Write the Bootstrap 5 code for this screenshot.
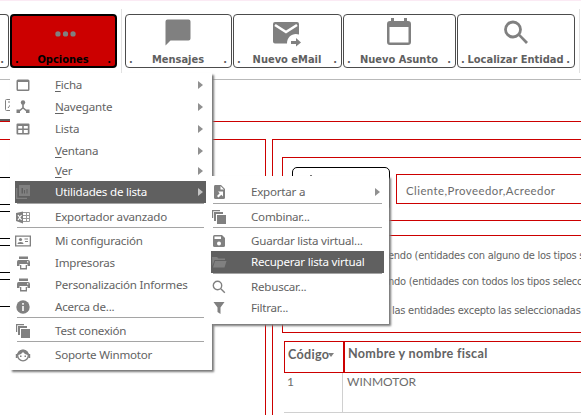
<!DOCTYPE html>
<html lang="es">
<head>
<meta charset="utf-8">
<meta name="viewport" content="width=device-width, initial-scale=1">
<title>Winmotor</title>
<link href="https://cdn.jsdelivr.net/npm/bootstrap@5.3.0/dist/css/bootstrap.min.css" rel="stylesheet">
<style>
html,body{margin:0;height:100%;overflow:hidden;background:#fff}
body{font-family:"Noto Sans",sans-serif;font-size:11.6px;line-height:1;color:#636363}
.screen{width:581px;height:415px}
svg{display:block;flex:none}
.ribbon{height:80px;border-top:1px solid #fbeaf4;border-bottom:1px solid #b9b9b9;gap:1px}
.tool{margin-top:13px;height:54px;flex:none;border:1px solid #4c4c4c;border-radius:4px;padding:0 4px 1px 3px;background:#fff;color:#606060;font:bold 11px/13px "DejaVu Sans Condensed","DejaVu Sans",sans-serif}
.tool svg{fill:#808080;height:31px;margin-top:2px}
.tool.cut{border-left:0;border-radius:0 4px 4px 0}
.tool.on{background:#c00;border:2px solid #000;color:#000;padding:0 4px 0 3px}
.tool.on svg{margin-top:1px}
.rule-v{width:1px;height:64px;margin-top:8px;background:#e2e2e2;flex:none}
.strip{height:42px;border-bottom:1px solid #c00}
.tab-mark{width:10px;height:2px;background:#606060}
.panes{height:276px;margin-top:17px;gap:6px}
.pane-l{width:266px;border:1px solid #c00;border-width:1px 1px 0 0;padding-top:37px;gap:6px}
.field{height:28px;border:1px solid #000;border-width:1px 0;width:190px;flex:none}
.pane-r{border:1px solid #c00;border-width:1px 0 0 1px;padding:17px 0 0 9px;min-width:0}
.group{border:1px solid #c00;border-right:0;white-space:nowrap;overflow:hidden;flex:none}
.g1{height:64px;padding:9px 0 0 9px;gap:6px}
.pick{width:98px;height:44px;border:1px solid #000;border-radius:5px;padding:7px 0 0 17px}
.pick i{display:block;width:2px;height:1px;background:#777}
.types{height:30px;margin-top:7px;border:1px solid #c00;border-right:0;padding:2px 0 0 9px;font:11.4px/28px "Lato",sans-serif;letter-spacing:.45px;color:#6c6c6c}
.g2{height:98px;margin-top:14px;padding:13px 0 0 105px;font:11px/14px "DejaVu Sans Condensed","DejaVu Sans",sans-serif;letter-spacing:-.25px}
.g2 div+div{margin-top:12px}
.g2 div+div+div{margin-top:15px;padding-left:4px}
.grid-box{margin:8px 0 0 2px}
.heads{height:32px;border:1px solid #c00;border-right:0;font:bold 12.6px/24px "Lato",sans-serif;letter-spacing:.3px}
.c1{width:59px;flex:none;padding-left:3px}
.heads .c1{border-right:1px solid #c00}
.heads .c2{border-left:1px solid #c00;padding-left:3px}
.vals{height:40px;border-bottom:1px solid #d0d0d0;font:12px/17px "Lato",sans-serif;color:#6c6c6c}
.vals .c1{border-right:1px solid #d0d0d0}
.vals .c2{padding-left:4px}
.popup{position:absolute;background:#fff;box-shadow:2px 2px 2px #777}
.p1{left:10px;top:73px;width:202px;height:297px;padding:1px 6px 0 5px}
.p2{left:211px;top:176px;width:178px;height:148px;padding:5px 5px 0 0}
.entry{height:22px;gap:24px;padding-left:0;white-space:nowrap;letter-spacing:-.23px}
.entry svg{width:16px;height:16px;fill:#808080}
.entry.s21{height:21px}.entry.s23{height:23px;padding-top:2px}.entry.s24{height:24px;padding-top:2px}
.entry .caret{width:5px;height:8px;fill:#909090;margin-right:3px}
.p2 .caret{margin-right:4px}
.entry.hot{background:#606060;color:#fff}
.hot .caret{fill:#c4c4c4}
.sep{height:1px;background:#a5a5a5;margin:0 2px}
u{text-underline-offset:2px;text-decoration-thickness:1px}
</style>
<script src="https://cdn.jsdelivr.net/npm/bootstrap@5.3.0/dist/js/bootstrap.bundle.min.js"></script>
</head>
<body>
<svg width="0" height="0" class="position-absolute">
<defs>
<symbol id="copy" viewBox="0 0 16 16"><path d="M6 6h9v9H6zM3 3h9v2H5v7H3zM1 1h8v1.200H2.200V9H1z"/></symbol>
<symbol id="print" viewBox="0 0 16 16"><path d="M4 1.500h9V4H4zM3.500 5h9.500Q15 5 15 7v4h-2.500V9h-8v2H2V7q0-2 1.500-2zM5 10h7v4.500H5z"/><path fill="#fff" d="M6.300 10h4.400v3H6.300zM12 6.300h1.300v1.300H12z"/></symbol>
<symbol id="caret" viewBox="0 0 5 8"><path d="M0 0l5 4-5 4z"/></symbol>
</defs></svg>
<main class="screen position-relative overflow-hidden">
<header class="ribbon d-flex">
 <div class="tool cut d-flex align-items-end justify-content-end" style="width:9px">.</div>
 <div class="tool on d-flex flex-column justify-content-between" style="width:107px"><svg viewBox="0 0 107 31" width="101"><circle cx="44" cy="17" r="2.800" transform="translate(1.500)"/><circle cx="53.500" cy="17" r="2.800"/><circle cx="61.500" cy="17" r="2.800"/></svg><div class="d-flex justify-content-between"><span>.</span><span>Opciones</span><span>.</span></div></div>
 <div class="rule-v" style="margin-left:3px;margin-right:2px"></div>
 <div class="tool d-flex flex-column justify-content-between" style="width:107px"><svg class="mx-auto" viewBox="0 0 30 31" width="30"><path d="M4.500 2.500h21q2 0 2 2v17q0 2-2 2H7.500l-5 5v-24q0-2 2-2z"/></svg><div class="d-flex justify-content-between"><span>.</span><span>Mensajes</span><span>.</span></div></div>
 <div class="tool d-flex flex-column justify-content-between" style="width:109px"><svg class="mx-auto" viewBox="0 0 30 31" width="30"><path d="M3 5h22q2 0 2 2v10.500c-6-2-12 2-12 9H3q-2 0-2-2V7q0-2 2-2z"/><path d="M3 8l11 7 11-7" fill="none" stroke="#fff" stroke-width="2.600"/><path d="M19 24h5v-3l5 4.500-5 4V27h-5z"/></svg><div class="d-flex justify-content-between"><span>.</span><span>Nuevo eMail</span><span>.</span></div></div>
 <div class="tool d-flex flex-column justify-content-between" style="width:113px"><svg class="mx-auto" viewBox="0 0 30 31" width="30"><path fill-rule="evenodd" d="M7 1h3v3h10V1h3v3h1q3 0 3 3v18q0 3-3 3H6q-3 0-3-3V7q0-3 3-3h1zM5.500 10v15.500h19V10z"/></svg><div class="d-flex justify-content-between"><span>.</span><span>Nuevo Asunto</span><span>.</span></div></div>
 <div class="tool d-flex flex-column justify-content-between" style="width:118px"><svg class="mx-auto" viewBox="0 0 30 31" width="30"><circle cx="12" cy="12.500" r="7.500" fill="none" stroke="#808080" stroke-width="2.800"/><path d="M17 18.500l2-1.500 8 8-2 2z"/></svg><div class="d-flex justify-content-between"><span>.</span><span>Localizar Entidad</span><span>.</span></div></div>
 <div class="rule-v" style="margin-left:3px"></div>
</header>
<div class="strip d-flex flex-column justify-content-between">
 <svg width="14" height="14" viewBox="0 0 14 14" style="margin:18px 0 0 5px" fill="none" stroke="#808080"><path d="M.500 2.500q0-1 1-1h10v11h-10q-1 0-1-1zM3 10l3-4M3 4h4"/></svg>
 <div class="tab-mark"></div>
</div>
<div class="panes d-flex">
 <section class="pane-l d-flex flex-column flex-shrink-0"><div class="field"></div><div class="field"></div><div class="field"></div><div class="field"></div></section>
 <section class="pane-r flex-grow-1 d-flex flex-column">
  <div class="group g1 d-flex align-items-start"><div class="pick"><i></i></div><div class="types flex-grow-1">Cliente,Proveedor,Acreedor</div></div>
  <div class="group g2"><div>endo (entidades con alguno de los tipos s</div><div>ndo (entidades con todos los tipos selecc</div><div>las entidades excepto las seleccionadas</div></div>
  <div class="grid-box text-nowrap">
   <div class="heads d-flex"><div class="c1 d-flex align-items-center pb-1">Código<svg width="6" height="4" viewBox="0 0 6 4" fill="#808080" style="margin-left:-1px"><path d="M0 0h6L3 4z"/></svg></div><div class="c2">Nombre y nombre fiscal</div></div>
   <div class="vals d-flex"><div class="c1">1</div><div class="c2">WINMOTOR</div></div>
  </div>
 </section>
</div>

<nav class="popup p1">
 <div class="entry d-flex align-items-center"><svg class="ic" viewBox="0 0 16 16"><path fill-rule="evenodd" d="M3 2.500h10q1.500 0 1.500 1.500v8.500q0 1.500-1.500 1.500H3q-1.500 0-1.500-1.500V4q0-1.500 1.500-1.500zM3 5v7.500h10V5z"/></svg><span><u>F</u>icha</span><svg class="caret ms-auto"><use href="#caret"/></svg></div>
 <div class="entry d-flex align-items-center"><svg class="ic" viewBox="0 0 16 16"><circle cx="8" cy="3.500" r="2.200"/><path d="M7.200 5h1.600v3.500l4 3.500-1 1L8 9.700 4.200 13l-1-1 4-3.500zM1.500 10.500h3.500V14H1.500zM11 10.500h3.500V14H11z"/></svg><span><u>N</u>avegante</span><svg class="caret ms-auto"><use href="#caret"/></svg></div>
 <div class="entry d-flex align-items-center"><svg class="ic" viewBox="0 0 16 16"><path fill-rule="evenodd" d="M3 2.500h10.500q1 0 1 1v9q0 1-1 1h-11q-1 0-1-1v-9q0-1 1-1zM3.200 5v2.500h4V5zM8.800 5v2.500h4V5zM3.200 9v3h4V9zM8.800 9v3h4V9z"/></svg><span>Lista</span><svg class="caret ms-auto"><use href="#caret"/></svg></div>
 <div class="entry s21 d-flex align-items-center"><svg class="ic"></svg><span><u>V</u>entana</span><svg class="caret ms-auto"><use href="#caret"/></svg></div>
 <div class="entry s21 d-flex align-items-center" style="height:20px"><svg class="ic"></svg><span><u>V</u>er</span><svg class="caret ms-auto"><use href="#caret"/></svg></div>
 <div class="entry hot d-flex align-items-center"><svg class="ic" viewBox="0 0 16 16"><path fill-rule="evenodd" d="M4 1h11v11H4zM6.500 4v5.500H8V4zM9 6v3.500h1V6zM11.500 5v4.500h1V5z"/><path d="M1 4h1.300v9.700H12V15H1z"/></svg><span>Utilidades de lista</span><svg class="caret ms-auto"><use href="#caret"/></svg></div>
 <div class="sep"></div>
 <div class="entry s23 d-flex align-items-center"><svg class="ic" viewBox="0 0 16 16"><path d="M1 4l7-1.500v12L1 12z"/><path d="M3 6l3.500 5M6.500 6L3 11" stroke="#fff" stroke-width="1.200"/><path fill="none" stroke="#999" d="M8 3.500h6.500v9H8M8 6.500h6.500M8 9.500h6.500M11.500 3.500v9"/></svg><span>Exportador avanzado</span></div>
 <div class="sep"></div>
 <div class="entry s24 d-flex align-items-center"><svg class="ic" viewBox="0 0 16 16"><path fill-rule="evenodd" d="M0 2.500h16v11H0zM1.300 3.800v8.400h13.400V3.800z"/><circle cx="5.500" cy="6.500" r="1.600"/><path d="M2.500 11q0-2 3-2t3 2zM9.500 5.500h3.500v1H9.500zM10 8h3v1h-3z"/></svg><span>Mi configuración</span></div>
 <div class="entry d-flex align-items-center"><svg class="ic"><use href="#print"/></svg><span>Impresoras</span></div>
 <div class="entry d-flex align-items-center"><svg class="ic"><use href="#print"/></svg><span>Personalización Informes</span></div>
 <div class="entry s21 d-flex align-items-center"><svg class="ic" viewBox="0 0 16 16"><circle cx="8" cy="8" r="6.700"/><path fill="#fff" d="M7.200 4h1.600v1.700H7.200zM7.200 7h1.600v5H7.200z"/></svg><span>Acerca de...</span></div>
 <div class="sep"></div>
 <div class="entry s23 d-flex align-items-center"><svg class="ic"><use href="#copy"/></svg><span>Test conexión</span></div>
 <div class="sep"></div>
 <div class="entry s24 d-flex align-items-center"><svg class="ic" viewBox="0 0 16 16"><circle cx="8" cy="8.500" r="5.300" fill="none" stroke="#808080" stroke-width="1.300"/><path d="M2 8C3 1 13 1 14 8q-4 0-6-3-2 3-6 3zM.800 7h1.800v4H.800zM13.400 7h1.800v4h-1.800zM5 8.500h1.500V10H5zM9.500 8.500H11V10H9.500z"/></svg><span>Soporte Winmotor</span></div>
</nav>
<nav class="popup p2">
 <div class="entry d-flex align-items-center"><svg class="ic" viewBox="0 0 16 16"><path d="M4 1h6l4 4v8.500q0 1.500-1.500 1.500h-8Q3 15 3 13.500V2.500Q3 1 4 1z"/><path fill="#fff" d="M9.500 2v3.500H13zM7 7.500h5v5l-1.700-1.700L7.500 13.500 6 12l2.700-2.700z"/></svg><span>Exportar a</span><svg class="caret ms-auto"><use href="#caret"/></svg></div>
 <div class="sep"></div>
 <div class="entry s23 d-flex align-items-center"><svg class="ic"><use href="#copy"/></svg><span>Combinar...</span></div>
 <div class="sep"></div>
 <div class="entry s23 d-flex align-items-center"><svg class="ic" viewBox="0 0 16 16"><path d="M3.500 2H11l3 3v7.500q0 1.500-1.500 1.500h-9Q2 14 2 12.500v-9Q2 2 3.500 2z"/><path fill="#fff" d="M3.500 3.500H10V6H3.500z"/><circle cx="8" cy="10.500" r="2" fill="#fff"/></svg><span>Guardar lista virtual...</span></div>
 <div class="entry hot d-flex align-items-center"><svg class="ic" viewBox="0 0 16 16"><path d="M1 3h5l1.500 1.500H14V6H3.500L1.500 12zM4 7h11.500l-2 6.500H2z"/></svg><span>Recuperar lista virtual</span></div>
 <div class="sep"></div>
 <div class="entry s23 d-flex align-items-center"><svg class="ic" viewBox="0 0 16 16"><circle cx="6.500" cy="6.500" r="4.200" fill="none" stroke="#808080" stroke-width="1.400"/><path d="M9.300 10.300l1-1 4 4-1 1z"/></svg><span>Rebuscar...</span></div>
 <div class="entry d-flex align-items-center"><svg class="ic" viewBox="0 0 16 16"><path d="M2.500 2h11L9.500 7.500V14L6.500 12V7.500z"/></svg><span>Filtrar...</span></div>
</nav>
</main>
</body>
</html>
